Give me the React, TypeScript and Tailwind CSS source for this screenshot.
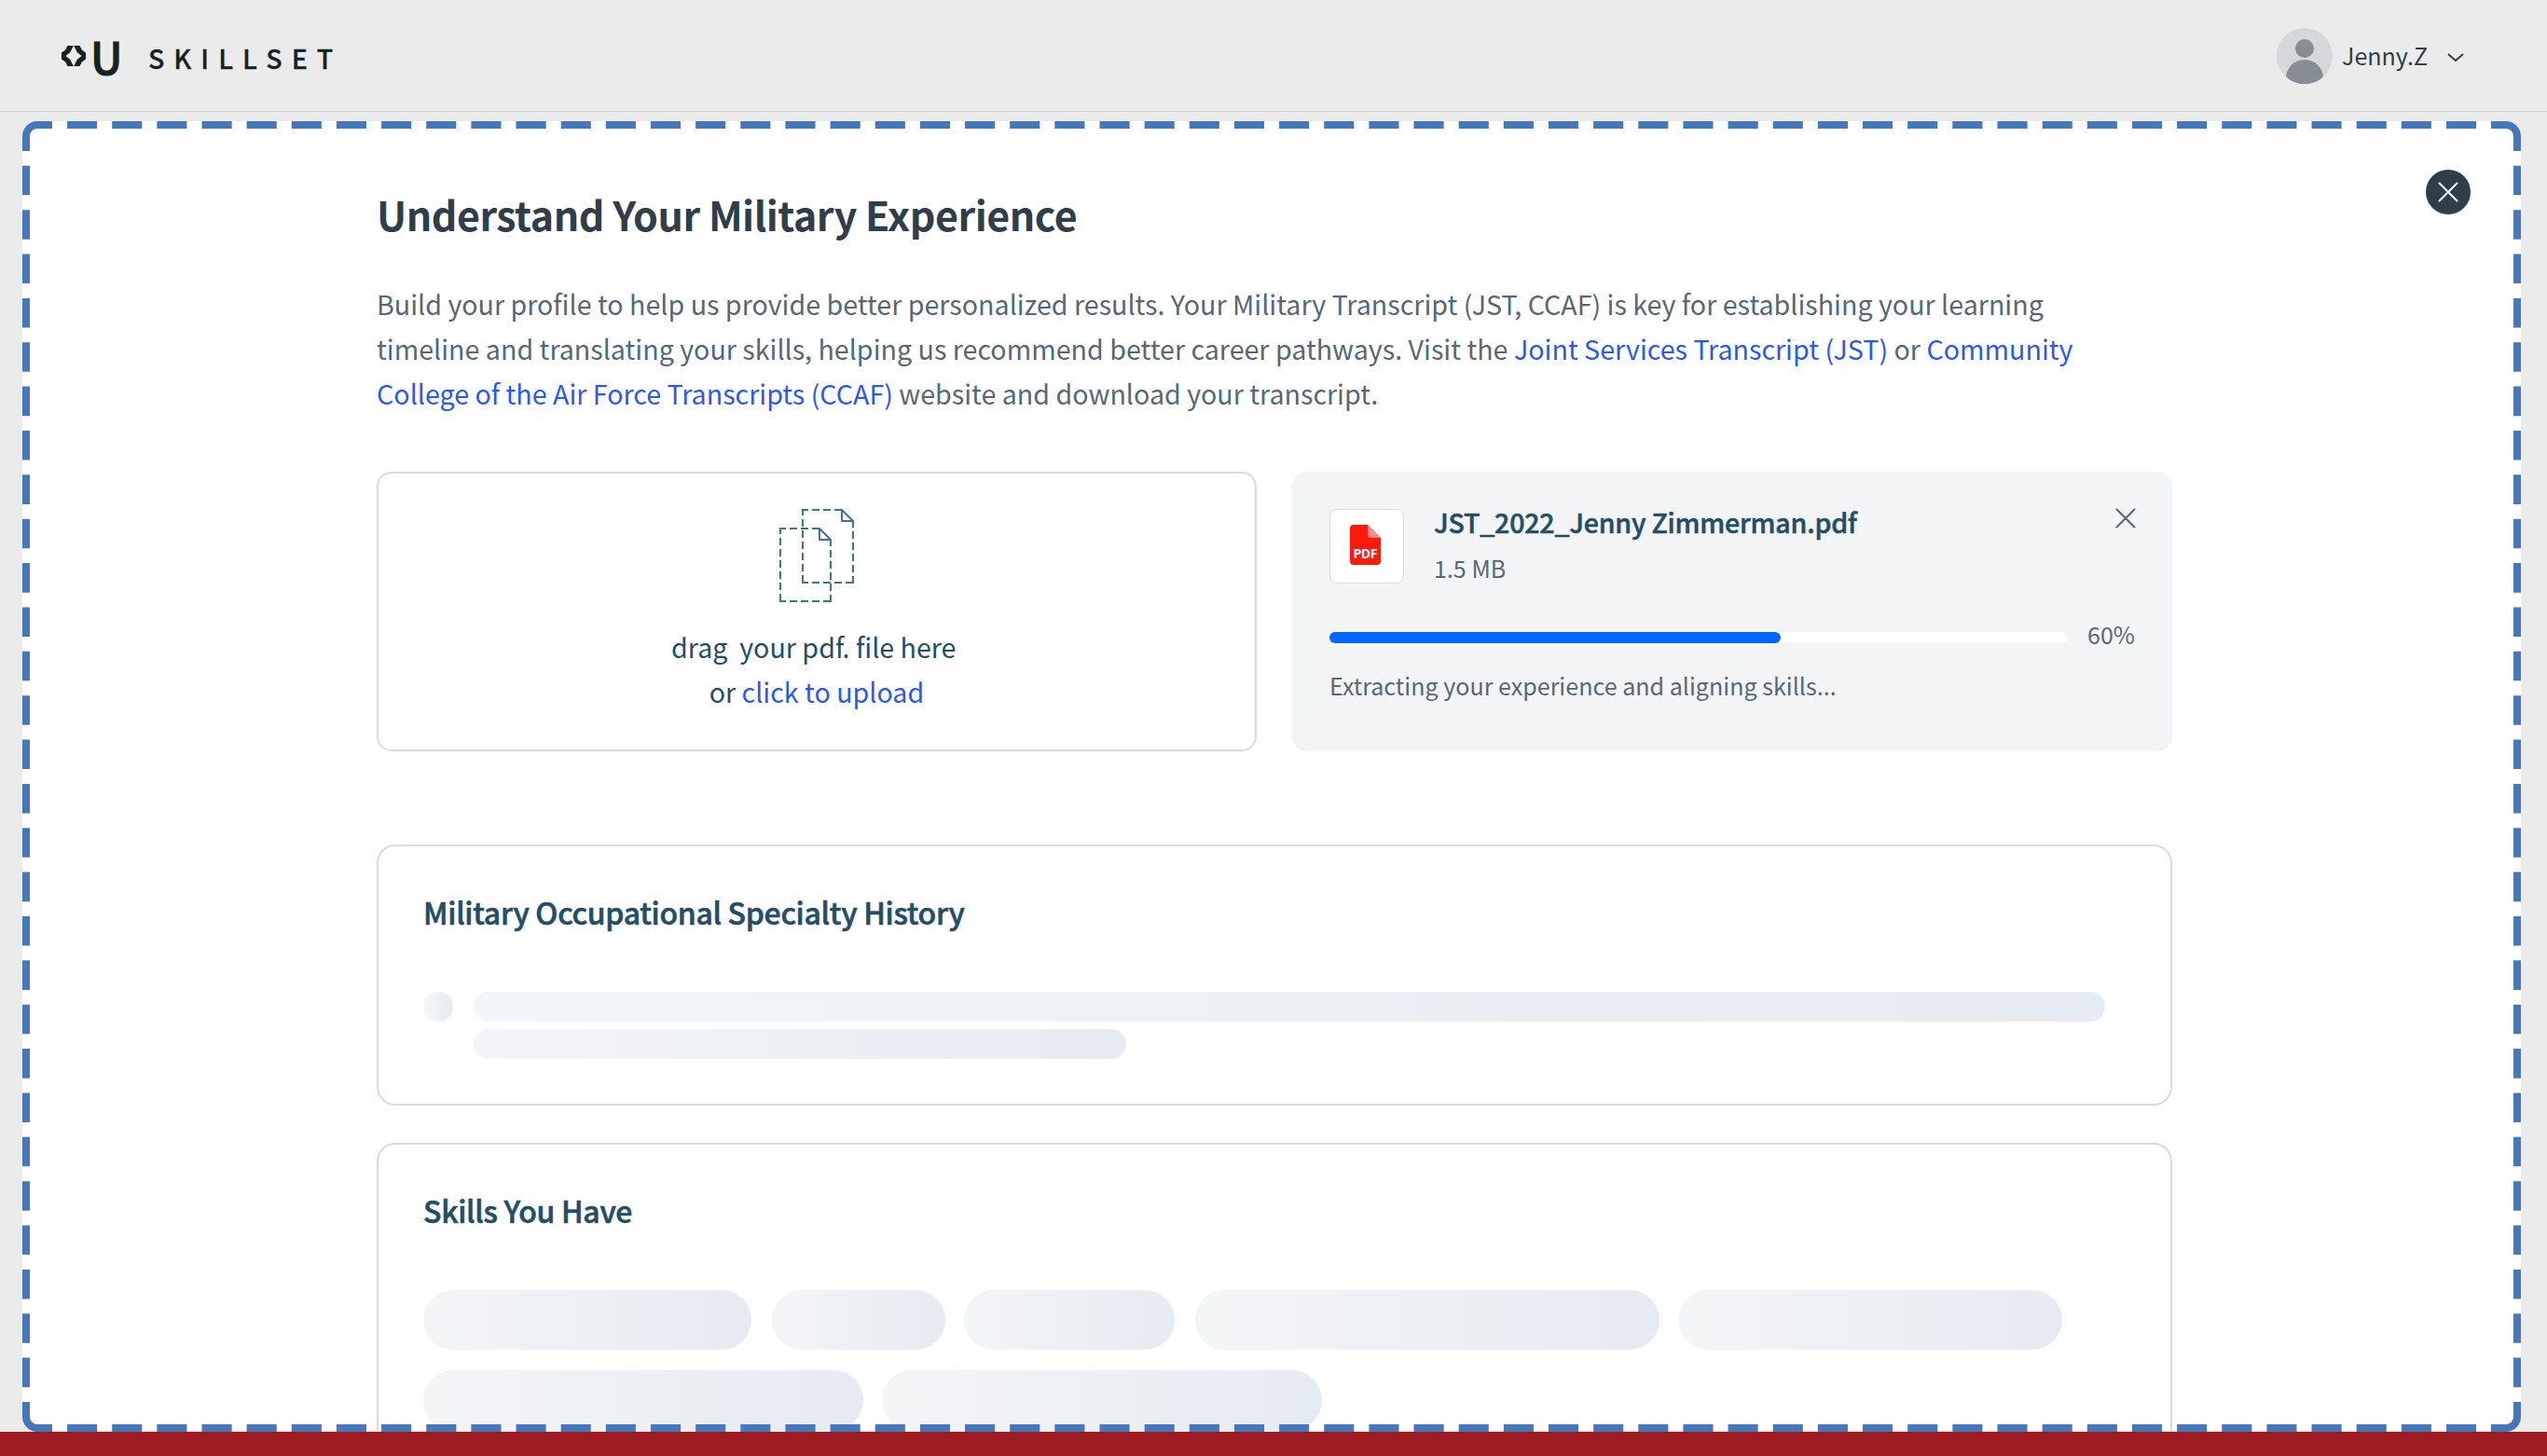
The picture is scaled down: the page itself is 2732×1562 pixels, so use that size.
const skillRows = [
  [
    { id: "a", width: 352, gap: 22 },
    { id: "b", width: 186, gap: 20 },
    { id: "c", width: 226, gap: 22 },
    { id: "d", width: 498, gap: 20 },
    { id: "e", width: 412, gap: 0 },
  ],
  [
    { id: "f", width: 472, gap: 20 },
    { id: "g", width: 472, gap: 0 },
  ],
];

function LogoMark() {
  return (
    <svg width="26" height="22" viewBox="0 0 26 22" fill="#16231f" className="mt-[1px] shrink-0">
      <path d="M6.4 0H12.8L9.2 7.2L4.4 11L9.2 14.8L12.8 22H6.4L4.2 17.6L0 14.4V7.6L4.2 4.4Z" />
      <path d="M19.6 0H13.2L16.8 7.2L21.6 11L16.8 14.8L13.2 22H19.6L21.8 17.6L26 14.4V7.6L21.8 4.4Z" />
    </svg>
  );
}

function Avatar() {
  return (
    <svg width="60" height="60" viewBox="0 0 60 60">
      <defs>
        <clipPath id="avatar-clip">
          <circle cx="30" cy="30" r="30" />
        </clipPath>
      </defs>
      <circle cx="30" cy="30" r="30" fill="#d5d7db" />
      <g clipPath="url(#avatar-clip)" fill="#868e93">
        <circle cx="30" cy="22" r="10" />
        <circle cx="30" cy="54" r="20" />
        <rect x="10" y="54" width="40" height="10" />
      </g>
    </svg>
  );
}

function DocOutline({ x, y }: { x: number; y: number }) {
  return (
    <g transform={`translate(${x} ${y})`}>
      <path d="M42 0H0" strokeDasharray="8 4" />
      <path d="M0 -1V79" strokeDasharray="8 4" strokeDashoffset="1" />
      <path d="M-1 78H55" strokeDasharray="8 4" strokeDashoffset="1" />
      <path d="M54 12V79" strokeDasharray="8 4" strokeDashoffset="1" />
      <path d="M42 0V12H54Z" strokeLinejoin="round" />
    </g>
  );
}

function UploadIcon() {
  return (
    <svg width="80" height="100" viewBox="0 0 80 100" fill="none" stroke="#3e7393" strokeWidth="2">
      <DocOutline x={25} y={1} />
      <DocOutline x={1} y={21} />
    </svg>
  );
}

function PdfIcon() {
  return (
    <svg width="33" height="43" viewBox="0 0 33 43">
      <path d="M4 0H19L33 14V39a4 4 0 0 1-4 4H4a4 4 0 0 1-4-4V4a4 4 0 0 1 4-4Z" fill="#ff1a0b" />
      <path d="M19 0L33 14H22a3 3 0 0 1-3-3Z" fill="#ff8d87" />
      <text
        x="16.5"
        y="35.5"
        textAnchor="middle"
        textLength="26"
        fontFamily="Open Sans"
        fontWeight="700"
        fontSize="14"
        fill="#fff"
      >
        PDF
      </text>
    </svg>
  );
}

function Cross() {
  return (
    <svg width="22" height="22" viewBox="0 0 22 22" fill="none" stroke="currentColor" strokeWidth="2" strokeLinecap="round">
      <path d="M1.5 1.5L20.5 20.5M20.5 1.5L1.5 20.5" />
    </svg>
  );
}

// Dashes are spaced so every side starts and ends on a gap next to a solid corner
function DashedFrame() {
  return (
    <svg
      className="absolute inset-0 pointer-events-none"
      width="2680"
      height="1406"
      viewBox="0 0 2680 1406"
      fill="none"
      stroke="#4578ba"
      strokeWidth="8"
    >
      <path d="M32 4H2648M32 1402H2648" strokeDasharray="32.1 16.05" strokeDashoffset="32.1" />
      <path d="M4 32V1374M2676 32V1374" strokeDasharray="31.576 15.788" strokeDashoffset="31.576" />
      <path d="M4 32V16A12 12 0 0 1 16 4H32" />
      <path d="M2648 4H2664A12 12 0 0 1 2676 16V32" />
      <path d="M2676 1374V1390A12 12 0 0 1 2664 1402H2648" />
      <path d="M32 1402H16A12 12 0 0 1 4 1390V1374" />
    </svg>
  );
}

export default function App() {
  return (
    <div className="w-[2732px] h-[1562px] flex flex-col overflow-hidden bg-[#ebebeb] font-['Noto_Sans_CJK_SC',sans-serif]">
      <header className="h-[120px] shrink-0 border-b border-[#c8c9ca] pl-[66px] pr-[89px] flex items-center justify-between">
        <div className="flex items-center text-[#16231f]">
          <LogoMark />
          <span className="ml-[5px] mt-[1px] text-[47px] leading-[60px] font-medium [-webkit-text-stroke:1px_#16231f]">U</span>
          <span className="ml-[27.5px] mt-[5px] text-[28.6px] leading-[40px] font-medium tracking-[10px] [-webkit-text-stroke:0.3px_#16231f]">
            SKILLSET
          </span>
        </div>
        <div className="flex items-center text-[#2f3e48]">
          <Avatar />
          <span className="ml-[10px] -mt-px text-[25.06px] leading-[40px]">Jenny.Z</span>
          <svg
            width="18"
            height="10"
            viewBox="0 0 18 10"
            className="ml-[21px] mt-[4px]"
            fill="none"
            stroke="currentColor"
            strokeWidth="2"
            strokeLinecap="round"
            strokeLinejoin="round"
          >
            <path d="M1.5 1.5L9 8L16.5 1.5" />
          </svg>
        </div>
      </header>

      <main className="px-6 pt-[10px]">
        <section className="relative w-[2680px] h-[1406px] overflow-hidden">
          <div className="h-[1404px] bg-white rounded-2xl pl-[380px] pt-[69px]">
            <h1 className="text-[43px] leading-[60px] font-bold tracking-[-0.5px] text-[#2f3e48]">
              Understand Your Military Experience
            </h1>
            <p className="mt-[43px] text-[28.65px] leading-[48px] text-[#546975] whitespace-nowrap">
              Build your profile to help us provide better personalized results. Your Military Transcript (JST, CCAF) is key for establishing your learning
              <br />
              timeline and translating your skills, helping us recommend better career pathways. Visit the{" "}
              <a className="text-[#2b59f0]">Joint Services Transcript (JST)</a> or <a className="text-[#2b59f0]">Community</a>
              <br />
              <a className="text-[#2b59f0]">College of the Air Force Transcripts (CCAF)</a> website and download your transcript.
            </p>

            <div className="mt-[60px] flex gap-[38px]">
              <div className="w-[944px] h-[300px] rounded-2xl border-2 border-[#d6dddf] pt-[38px] flex flex-col items-center">
                <UploadIcon />
                <p className="mt-[24px] text-[28.65px] leading-[48px] text-[#244d66] text-center whitespace-pre">
                  {"drag  your pdf. file here "}
                  <br />
                  or <a className="text-[#2b59f0]">click to upload</a>
                </p>
              </div>

              <div className="w-[944px] h-[300px] rounded-2xl bg-[#f3f4f6] px-10 pt-10 text-[#546975]">
                <div className="flex items-start">
                  <div className="size-20 rounded-lg border border-[#d6dddf] bg-white flex items-center justify-center pr-[4px] pb-[4px]">
                    <PdfIcon />
                  </div>
                  <div className="ml-8 -mt-[10px]">
                    <p className="text-[28.64px] leading-[48px] font-medium tracking-[-0.24px] text-[#244d66] [-webkit-text-stroke:0.5px_#244d66]">
                      JST_2022_Jenny Zimmerman.pdf
                    </p>
                    <p className="mt-[5px] text-[25.06px] leading-[40px]">1.5 MB</p>
                  </div>
                  <div className="ml-auto -mt-px -mr-px">
                    <Cross />
                  </div>
                </div>
                <div className="mt-[35px] h-10 flex items-center">
                  <div className="w-[792px] h-3 rounded-full bg-white">
                    <div className="w-[484px] h-3 rounded-full bg-[#0066ff]" />
                  </div>
                  <span className="ml-[21px] pb-[8px] text-[25.06px] leading-[40px]">60%</span>
                </div>
                <p className="mt-[9px] text-[25.08px] leading-[44px]">Extracting your experience and aligning skills...</p>
              </div>
            </div>

            <div className="mt-[100px] w-[1926px] h-[280px] rounded-[20px] border-2 border-[#d6dddf] pl-12 pt-[46px]">
              <h2 className="text-[32px] leading-[48px] font-medium tracking-[-0.32px] text-[#244d66] [-webkit-text-stroke:0.6px_#244d66]">
                Military Occupational Specialty History
              </h2>
              <div className="mt-[62px] flex gap-[22px]">
                <div className="size-8 rounded-full bg-linear-to-r from-[#f4f5f8] to-[#e5ebf2]" />
                <div className="flex flex-col gap-2">
                  <div className="w-[1750px] h-8 rounded-full bg-linear-to-r from-[#f4f5f8] to-[#e5ebf2]" />
                  <div className="w-[700px] h-8 rounded-full bg-linear-to-r from-[#f4f5f8] to-[#e5ebf2]" />
                </div>
              </div>
            </div>

            <div className="mt-10 w-[1926px] h-[400px] rounded-[20px] border-2 border-[#d6dddf] pl-12 pt-[46px]">
              <h2 className="text-[32px] leading-[48px] font-medium tracking-[-0.32px] text-[#244d66] [-webkit-text-stroke:0.6px_#244d66]">
                Skills You Have
              </h2>
              <div className="mt-[62px] flex flex-col gap-[22px]">
                {skillRows.map((row, i) => (
                  <div key={i} className="flex">
                    {row.map((pill) => (
                      <div
                        key={pill.id}
                        className="h-16 shrink-0 rounded-full bg-linear-to-r from-[#f4f5f7] to-[#e5ebf2]"
                        style={{ width: pill.width, marginRight: pill.gap }}
                      />
                    ))}
                  </div>
                ))}
              </div>
            </div>
          </div>

          <button className="absolute top-[52px] right-[54px] size-12 rounded-full bg-[#2f3e48] text-white flex items-center justify-center">
            <Cross />
          </button>
          <DashedFrame />
        </section>
      </main>

      <footer className="h-[26px] shrink-0 bg-[#a01c23]" />
    </div>
  );
}
